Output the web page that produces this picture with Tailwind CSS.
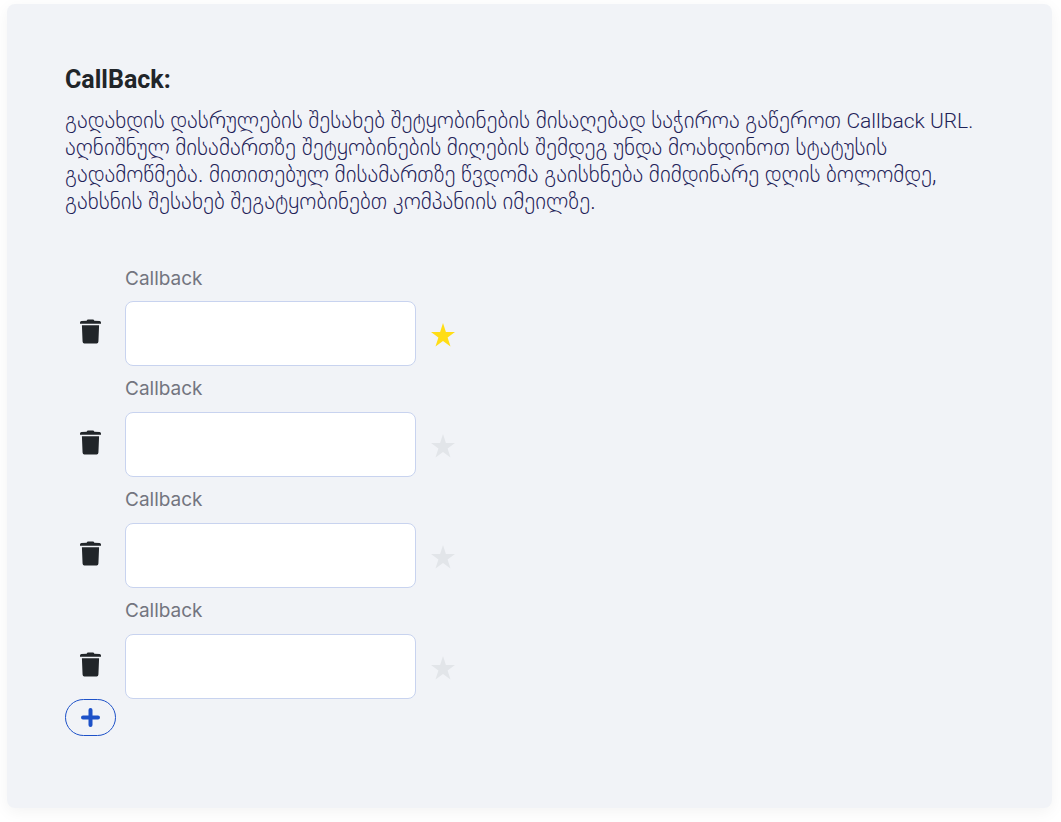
<!DOCTYPE html>
<html lang="ka">
<head>
    <meta charset="UTF-8">
    <meta name="viewport" content="width=device-width, initial-scale=1.0">
    <title>CallBack</title>
    <script src="https://cdn.jsdelivr.net/npm/@tailwindcss/browser@4"></script>
</head>
<body class="bg-white pt-1 pl-[7px] pr-[9px] pb-4">
    <svg class="hidden">
        <symbol id="trash" viewBox="0 0 22 25">
            <path d="M7 1.200Q7.300 0 8.500 0h5q1.200 0 1.500 1.200L20.500 1.500Q22 1.600 22 3v1.300H0V3Q0 1.600 1.500 1.500zM2 6h18l-.7 17Q19.200 25 17.500 25h-13Q2.800 25 2.700 23z"/>
        </symbol>
        <symbol id="star" viewBox="0 0 24 24">
            <path d="M12 0l2.900 9H24l-7.400 5.500L19.500 23.500 12 18 4.500 23.500l2.900-9L0 9h9.100z"/>
        </symbol>
    </svg>

    <main class="rounded-lg bg-[#f1f3f7] px-[58px] pt-[61px] pb-[72px] shadow-[0_4px_16px_rgba(0,0,0,0.05)]">
        <h1 class="font-['Roboto',sans-serif] text-[25px] leading-[30px] font-bold text-[#212529]">CallBack:</h1>
        <p class="mt-3 font-['Roboto','DejaVu_Sans',sans-serif] text-[23px] leading-[27px] font-light text-[#1e2257]">
            გადახდის დასრულების შესახებ შეტყობინების მისაღებად საჭიროა გაწეროთ <span class="text-[21px] leading-none">Callback URL.</span><br>
            აღნიშნულ მისამართზე შეტყობინების მიღების შემდეგ უნდა მოახდინოთ სტატუსის<br>
            გადამოწმება. მითითებულ მისამართზე წვდომა გაისხნება მიმდინარე დღის ბოლომდე,<br>
            გახსნის შესახებ შეგატყობინებთ კომპანიის იმეილზე.
        </p>

        <form class="mt-[47px] font-['Inter',sans-serif]">
            <!-- Callback rows -->
            <div class="grid grid-cols-[50px_291px_24px] items-center gap-x-[10px] text-[#212529]">
                <label for="callback1" class="col-start-2 flex h-[39px] items-start pt-[3px] text-[19px] leading-[27px] text-[#73757f]">Callback</label>
                <button type="button" aria-label="Delete" class="col-start-1 flex justify-center pb-[5px] pl-px"><svg class="h-[25px] w-[21px] fill-current"><use href="#trash"/></svg></button>
                <input id="callback1" type="text" class="h-[65px] w-full rounded-lg border border-[#c8d3ef] bg-white px-4">
                <button type="button" aria-label="Default" class="ml-[5px] pt-[2px] text-[#ffdd15]"><svg class="size-6 fill-current"><use href="#star"/></svg></button>

                <label for="callback2" class="col-start-2 flex h-[46px] items-start pt-[9px] text-[19px] leading-[27px] text-[#73757f]">Callback</label>
                <button type="button" aria-label="Delete" class="col-start-1 flex justify-center pb-[5px] pl-px"><svg class="h-[25px] w-[21px] fill-current"><use href="#trash"/></svg></button>
                <input id="callback2" type="text" class="h-[65px] w-full rounded-lg border border-[#c8d3ef] bg-white px-4">
                <button type="button" aria-label="Default" class="ml-[5px] pt-[2px] text-[#e2e5e9]"><svg class="size-6 fill-current"><use href="#star"/></svg></button>

                <label for="callback3" class="col-start-2 flex h-[46px] items-start pt-[9px] text-[19px] leading-[27px] text-[#73757f]">Callback</label>
                <button type="button" aria-label="Delete" class="col-start-1 flex justify-center pb-[5px] pl-px"><svg class="h-[25px] w-[21px] fill-current"><use href="#trash"/></svg></button>
                <input id="callback3" type="text" class="h-[65px] w-full rounded-lg border border-[#c8d3ef] bg-white px-4">
                <button type="button" aria-label="Default" class="ml-[5px] pt-[2px] text-[#e2e5e9]"><svg class="size-6 fill-current"><use href="#star"/></svg></button>

                <label for="callback4" class="col-start-2 flex h-[46px] items-start pt-[9px] text-[19px] leading-[27px] text-[#73757f]">Callback</label>
                <button type="button" aria-label="Delete" class="col-start-1 flex justify-center pb-[5px] pl-px"><svg class="h-[25px] w-[21px] fill-current"><use href="#trash"/></svg></button>
                <input id="callback4" type="text" class="h-[65px] w-full rounded-lg border border-[#c8d3ef] bg-white px-4">
                <button type="button" aria-label="Default" class="ml-[5px] pt-[2px] text-[#e2e5e9]"><svg class="size-6 fill-current"><use href="#star"/></svg></button>
            </div>

            <button type="button" aria-label="Add callback" class="flex h-[37px] w-[51px] items-center justify-center rounded-full border border-[#1d51c8] text-[#1d51c8]">
                <svg class="size-[19px]" viewBox="0 0 19 19" fill="none" stroke="currentColor" stroke-width="4" stroke-linecap="round"><path d="M9.500 2v15M2 9.500h15"/></svg>
            </button>
        </form>
    </main>
</body>
</html>
